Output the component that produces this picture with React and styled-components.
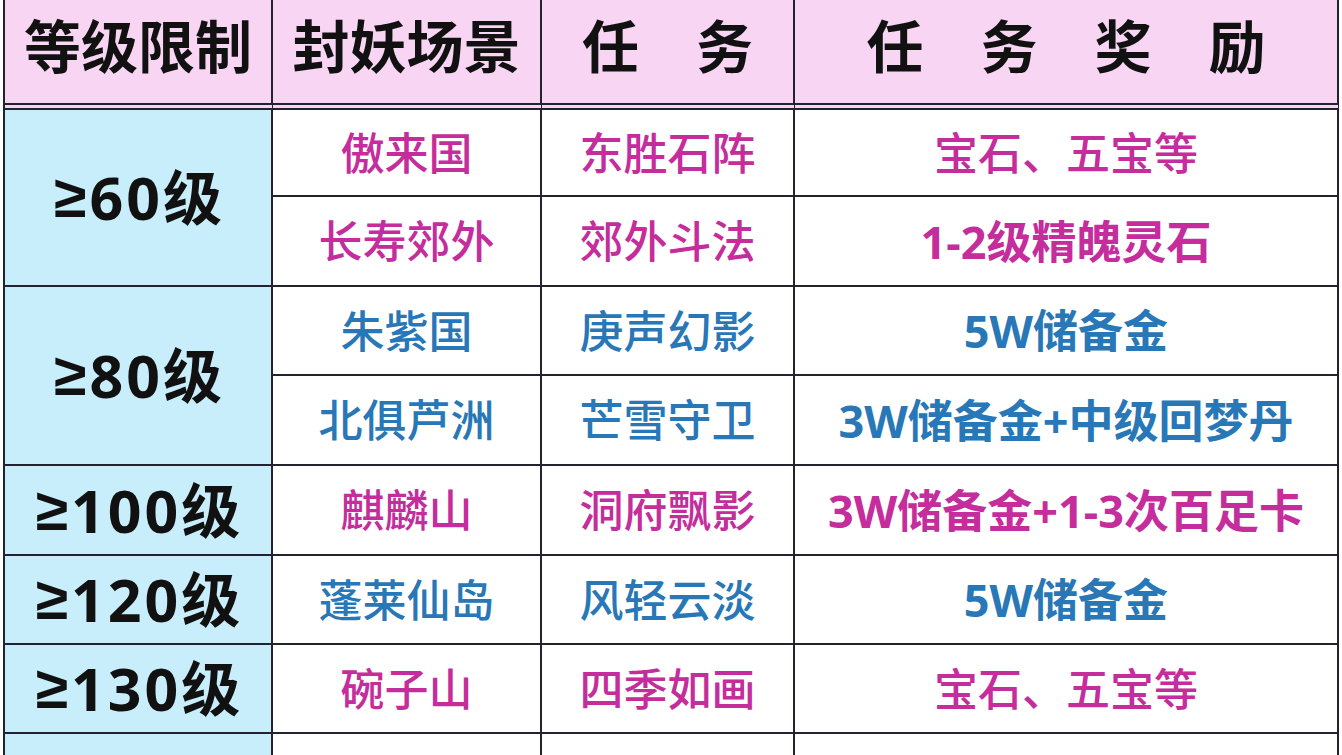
import React from 'react';
import styled, { createGlobalStyle } from 'styled-components';

const Global = createGlobalStyle`
  html, body { margin: 0; padding: 0; background: #ffffff; }
  body { overflow: hidden; font-family: "Noto Sans", "Noto Sans CJK SC", sans-serif; }
`;

const LINE = '#23232f';
const PINK = '#c52c9c';
const BLUE = '#2877b7';

const Page = styled.div`
  width: 1342px;
  height: 755px;
  overflow: hidden;
  background: #ffffff;
  padding-left: 3px;
  box-sizing: border-box;
`;

const Table = styled.div`
  display: grid;
  grid-template-columns: 268px 269px 253px 544px;
  grid-template-rows: 110px 87px 90px 89px 90px 90px 89px 89px 89px;
  width: max-content;
  border-left: 2px solid ${LINE};
`;

const HeadCell = styled.div`
  box-sizing: border-box;
  display: flex;
  align-items: center;
  justify-content: center;
  padding-bottom: 16px;
  background: #f9d5f4;
  border-right: 2px solid ${LINE};
  border-bottom: 7px double ${LINE};
  color: #111111;
  font-family: "Noto Sans CJK SC", sans-serif;
  font-weight: 700;
  font-size: 57px;
  line-height: 1;
  white-space: pre;
`;

const LevelCell = styled.div`
  box-sizing: border-box;
  grid-row: span ${(p) => p.$span};
  display: flex;
  align-items: center;
  justify-content: center;
  padding-left: 3px;
  background: #c8eefb;
  border-right: 2px solid ${LINE};
  border-bottom: 2px solid ${LINE};
  color: #111111;
  font-family: "Noto Sans", "Noto Sans CJK SC", sans-serif;
  font-weight: 700;
  font-size: 59px;
  letter-spacing: 3px;
  line-height: 1;
`;

const GreaterEq = styled.span`
  font-family: "Liberation Sans", "DejaVu Sans", sans-serif;
  font-weight: 700;
`;

const Cell = styled.div`
  box-sizing: border-box;
  display: flex;
  align-items: center;
  justify-content: center;
  background: #ffffff;
  border-right: 2px solid ${LINE};
  border-bottom: 2px solid ${LINE};
  color: ${(p) => (p.$tone === 'blue' ? BLUE : PINK)};
  font-family: "Noto Sans", "Noto Sans CJK SC", sans-serif;
  font-weight: ${(p) => (p.$bold ? 700 : 500)};
  font-size: ${(p) => (p.$bold ? 45 : 44)}px;
  line-height: 1;
  white-space: nowrap;
`;

const headers = ['等级限制', '封妖场景', '任　务', '任　务　奖　励'];

const groups = [
  {
    level: '60',
    tone: 'pink',
    rows: [
      { scene: '傲来国', task: '东胜石阵', reward: '宝石、五宝等', bold: false },
      { scene: '长寿郊外', task: '郊外斗法', reward: '1-2级精魄灵石', bold: true },
    ],
  },
  {
    level: '80',
    tone: 'blue',
    rows: [
      { scene: '朱紫国', task: '庚声幻影', reward: '5W储备金', bold: true },
      { scene: '北俱芦洲', task: '芒雪守卫', reward: '3W储备金+中级回梦丹', bold: true },
    ],
  },
  {
    level: '100',
    tone: 'pink',
    rows: [{ scene: '麒麟山', task: '洞府飘影', reward: '3W储备金+1-3次百足卡', bold: true }],
  },
  {
    level: '120',
    tone: 'blue',
    rows: [{ scene: '蓬莱仙岛', task: '风轻云淡', reward: '5W储备金', bold: true }],
  },
  {
    level: '130',
    tone: 'pink',
    rows: [{ scene: '碗子山', task: '四季如画', reward: '宝石、五宝等', bold: false }],
  },
  {
    level: '140',
    tone: 'blue',
    rows: [
      { scene: '无名鬼城', task: '鬼城夜话', reward: '5W储备金', bold: true },
      { scene: '女儿村外', task: '村外寻宝', reward: '宝石、五宝等', bold: false },
    ],
  },
];

export default function App() {
  return (
    <Page>
      <Global />
      <Table>
        {headers.map((h) => (
          <HeadCell key={h}>{h}</HeadCell>
        ))}
        {groups.map((g) => (
          <React.Fragment key={g.level}>
            {g.rows.map((r, i) => (
              <React.Fragment key={r.scene}>
                {i === 0 && (
                  <LevelCell $span={g.rows.length}>
                    <GreaterEq>≥</GreaterEq>
                    {g.level}级
                  </LevelCell>
                )}
                <Cell $tone={g.tone}>{r.scene}</Cell>
                <Cell $tone={g.tone}>{r.task}</Cell>
                <Cell $tone={g.tone} $bold={r.bold}>{r.reward}</Cell>
              </React.Fragment>
            ))}
          </React.Fragment>
        ))}
      </Table>
    </Page>
  );
}
